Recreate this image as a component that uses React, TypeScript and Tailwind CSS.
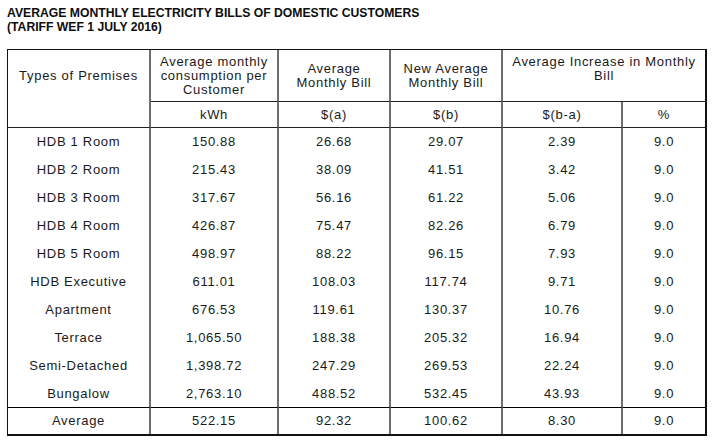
import React from "react";

const rows: string[][] = [
  ["HDB 1 Room", "150.88", "26.68", "29.07", "2.39", "9.0"],
  ["HDB 2 Room", "215.43", "38.09", "41.51", "3.42", "9.0"],
  ["HDB 3 Room", "317.67", "56.16", "61.22", "5.06", "9.0"],
  ["HDB 4 Room", "426.87", "75.47", "82.26", "6.79", "9.0"],
  ["HDB 5 Room", "498.97", "88.22", "96.15", "7.93", "9.0"],
  ["HDB Executive", "611.01", "108.03", "117.74", "9.71", "9.0"],
  ["Apartment", "676.53", "119.61", "130.37", "10.76", "9.0"],
  ["Terrace", "1,065.50", "188.38", "205.32", "16.94", "9.0"],
  ["Semi-Detached", "1,398.72", "247.29", "269.53", "22.24", "9.0"],
  ["Bungalow", "2,763.10", "488.52", "532.45", "43.93", "9.0"],
];
const avg = ["Average", "522.15", "92.32", "100.62", "8.30", "9.0"];

const V = "border-r-2 border-r-[#6e6e6e]";

export default function App() {
  return (
    <div className="w-[716px] h-[447px] bg-white text-[#1a1a1a] font-['Liberation_Sans',Arial,sans-serif] overflow-hidden">
      <div className="pl-[7px] pt-[6px] text-[12.2px] leading-[14px] font-bold text-[#0d0d0d]">
        <div>AVERAGE MONTHLY ELECTRICITY BILLS OF DOMESTIC CUSTOMERS</div>
        <div>(TARIFF WEF 1 JULY 2016)</div>
      </div>
      <div className="ml-[7px] mt-[15px] w-[700px] border-t border-l border-t-[#111] border-l-[#111] border-r-2 border-b-2 border-r-[#111] border-b-[#111] grid grid-cols-[143px_128px_112px_112px_120px_82px] text-[13px] tracking-[0.7px] leading-[14px]">
        {/* header row 1 */}
        <div className={`h-[52px] flex items-center justify-center ${V}`}>Types of Premises</div>
        <div className={`h-[52px] flex items-center justify-center text-center border-b border-b-[#222] ${V}`}>
          <div>Average monthly<br />consumption per<br />Customer</div>
        </div>
        <div className={`h-[52px] flex items-center justify-center text-center border-b border-b-[#222] ${V}`}>
          <div>Average<br />Monthly Bill</div>
        </div>
        <div className={`h-[52px] flex items-center justify-center text-center border-b border-b-[#222] ${V}`}>
          <div>New Average<br />Monthly Bill</div>
        </div>
        <div className="col-span-2 h-[52px] flex items-start justify-center text-center pt-[5px] border-b border-b-[#222]">
          <div>Average Increase in Monthly<br />Bill</div>
        </div>
        {/* header row 2 */}
        <div className={`h-[26px] border-b border-b-[#222] ${V}`}></div>
        <div className={`h-[26px] flex items-center justify-center border-b border-b-[#222] ${V}`}>kWh</div>
        <div className={`h-[26px] flex items-center justify-center border-b border-b-[#222] ${V}`}>$(a)</div>
        <div className={`h-[26px] flex items-center justify-center border-b border-b-[#222] ${V}`}>$(b)</div>
        <div className={`h-[26px] flex items-center justify-center border-b border-b-[#222] ${V}`}>$(b-a)</div>
        <div className="h-[26px] flex items-center justify-center border-b border-b-[#222]">%</div>
        {/* data rows */}
        {rows.map((r, ri) =>
          r.map((c, ci) => (
            <div
              key={`${ri}-${ci}`}
              className={`h-[28px] flex items-center justify-center ${ci < 5 ? V : ""} ${ri === rows.length - 1 ? "border-b border-b-[#000]" : ""}`}
            >
              {c}
            </div>
          ))
        )}
        {avg.map((c, ci) => (
          <div key={`a-${ci}`} className={`h-[26px] flex items-center justify-center ${ci < 5 ? V : ""}`}>
            {c}
          </div>
        ))}
      </div>
    </div>
  );
}
